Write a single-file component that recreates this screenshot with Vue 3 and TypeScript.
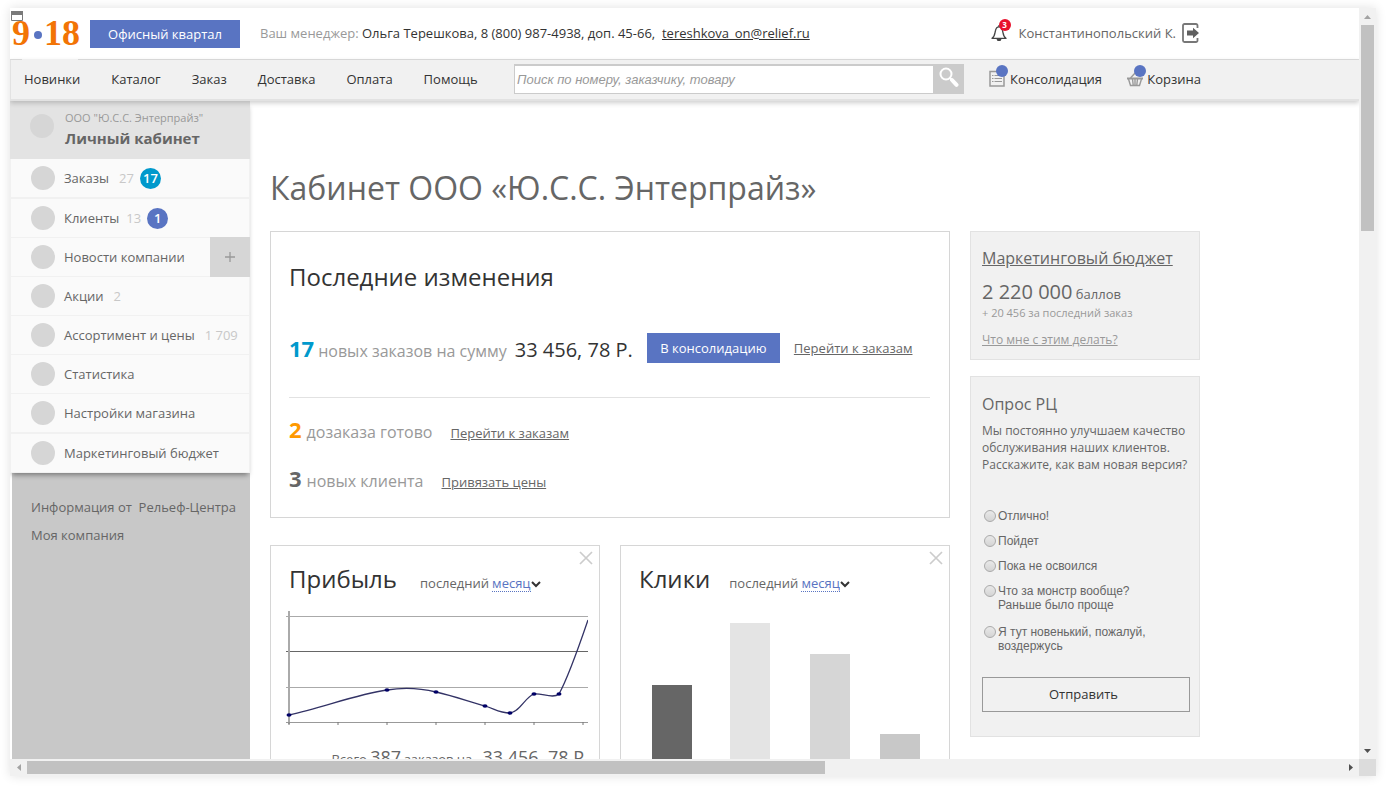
<script setup lang="ts">
import { ref } from 'vue'

interface MenuItem {
  title: string
  count?: string
  badge?: string
  tone?: string
  tight?: boolean
  thick?: boolean
  expandable?: boolean
}

const navLinks: string[] = ['Новинки', 'Каталог', 'Заказ', 'Доставка', 'Оплата', 'Помощь']

const menu: MenuItem[] = [
  { title: 'Заказы', count: '27', badge: '17', tone: 'cyan', thick: true },
  { title: 'Клиенты', count: '13', badge: '1', tone: 'blue', tight: true },
  { title: 'Новости компании', expandable: true },
  { title: 'Акции', count: '2' },
  { title: 'Ассортимент и цены', count: '1 709' },
  { title: 'Статистика' },
  { title: 'Настройки магазина', thick: true },
  { title: 'Маркетинговый бюджет' },
]

const answers: string[][] = [
  ['Отлично!'],
  ['Пойдет'],
  ['Пока не освоился'],
  ['Что за монстр вообще?', 'Раньше было проще'],
  ['Я тут новенький, пожалуй,', 'воздержусь'],
]

const ticks: number[] = [5, 54, 103, 152, 201, 250, 299]
const points: number[][] = [[5, 104], [103, 79], [152, 81], [201, 95], [226, 102], [250, 83], [275, 83]]

const query = ref('')
const answer = ref('')
const profitPeriod = ref('месяц')
const clicksPeriod = ref('месяц')
</script>

<template>
  <div class="stage">
    <div class="frame">
      <div class="page">
        <header class="top">
          <svg class="window-icon" width="12" height="10" viewBox="0 0 12 10" aria-hidden="true">
            <path d="M.5 .5h11v9H.5z" fill="#fff" stroke="#7a7a7a" />
            <path d="M0 0h12v4H0z" fill="#7a7a7a" />
          </svg>
          <div class="bar">
            <a href="#" class="logo"><span>9</span><i></i><span>18</span></a>
            <button type="button" class="btn quarter">Офисный квартал</button>
            <p class="manager">
              Ваш менеджер: <span>Ольга Терешкова, 8 (800) 987-4938, доп. 45-66,&nbsp; <a href="#">tereshkova_on@relief.ru</a></span>
            </p>
            <div class="user">
              <button type="button" class="plain bell" aria-label="Уведомления">
                <svg width="16" height="18" viewBox="0 0 16 18" fill="none" stroke="#444" stroke-width="1.3">
                  <path d="M1 14.300C4 12.500 3.800 9 4.500 6.500 5 4 6.300 2.800 8 2.800S11 4 11.500 6.500c.7 2.500.5 6 3.500 7.800z" stroke-linejoin="round" />
                  <path d="M8 1v2" />
                  <path d="M5.500 15h5L9.500 17h-3z" fill="#444" stroke="none" />
                </svg>
                <span class="alerts">3</span>
              </button>
              <span class="user-name">Константинопольский К.</span>
              <button type="button" class="plain exit" aria-label="Выйти">
                <svg width="18" height="20" viewBox="0 0 18 20" fill="none">
                  <path d="M15.500 5V2.500a1.500 1.500 0 0 0-1.500-1.500H2.500A1.500 1.500 0 0 0 1 2.500v15A1.500 1.500 0 0 0 2.500 19H14a1.500 1.500 0 0 0 1.500-1.500V15" stroke="#777" stroke-width="1.800" />
                  <path d="M5 7.500h6V4.800l6 5.200-6 5.200v-2.700H5z" fill="#606060" />
                </svg>
              </button>
            </div>
          </div>
        </header>

        <nav class="nav">
          <div class="bar">
            <div class="links">
              <a v-for="(link, i) in navLinks" :key="link" href="#" :class="{ current: i === 0 }">{{ link }}</a>
            </div>
            <form class="search" @submit.prevent>
              <input v-model="query" type="text" placeholder="Поиск по номеру, заказчику, товару" aria-label="Поиск" />
              <button type="submit" aria-label="Найти">
                <svg width="20" height="21" viewBox="0 0 20 21" fill="none" stroke="#fff">
                  <circle cx="7" cy="7" r="5.500" stroke-width="2" />
                  <path d="M11 11l2 2" stroke-width="2" />
                  <path d="M13 13l4.500 4.800" stroke-width="4" stroke-linecap="round" />
                </svg>
              </button>
            </form>
            <a href="#" class="tool consolidation">
              <span class="tool-icon">
                <svg width="16" height="17" viewBox="0 0 16 17" fill="none" stroke="#999">
                  <path d="M1 1.500h14v14.500H1z" stroke-width="1.500" />
                  <path d="M5.500 5.500H13M5.500 8.500H13M5.500 11.500H13M3 5.500h1.500M3 8.500h1.500M3 11.500h1.500" />
                </svg>
                <i></i>
              </span>
              <span>Консолидация</span>
            </a>
            <a href="#" class="tool basket">
              <span class="tool-icon">
                <svg width="16" height="17" viewBox="0 0 16 17" fill="none" stroke="#999">
                  <path d="M0 8.500h16" stroke-width="2" />
                  <path d="M1.500 9l2 6.500h9l2-6.500M5.500 9l.7 6M8 9v6M10.500 9l-.7 6" stroke-width="1.400" />
                  <path d="M3.500 8L9 2" stroke-width="1.400" />
                </svg>
                <i></i>
              </span>
              <span>Корзина</span>
            </a>
          </div>
        </nav>

        <div class="body">
          <aside class="side">
            <div class="menu">
              <a href="#" class="account">
                <i class="dot"></i>
                <span><small>ООО "Ю.С.С. Энтерпрайз"</small><b>Личный кабинет</b></span>
              </a>
              <ul>
                <li v-for="item in menu" :key="item.title" :class="{ thick: item.thick }">
                  <a href="#">
                    <i class="dot"></i>
                    <span>{{ item.title }}</span>
                    <span v-if="item.count" class="count" :class="{ tight: item.tight }">{{ item.count }}</span>
                    <span v-if="item.badge" class="badge" :class="item.tone">{{ item.badge }}</span>
                  </a>
                  <button v-if="item.expandable" type="button" class="expand" aria-label="Развернуть">
                    <svg width="10" height="10" viewBox="0 0 10 10"><path d="M5 0v10M0 5h10" stroke="#999" stroke-width="1.300" /></svg>
                  </button>
                </li>
              </ul>
            </div>
            <div class="side-links">
              <a href="#">Информация от&nbsp; Рельеф-Центра</a>
              <a href="#">Моя компания</a>
            </div>
          </aside>

          <main class="main">
            <h1>Кабинет ООО «Ю.С.С. Энтерпрайз»</h1>
            <div class="columns">
              <div class="left">
                <section class="card changes">
                  <h2>Последние изменения</h2>
                  <div class="first">
                    <div class="row">
                      <b class="cyan-text">17</b>
                      <span class="muted">новых заказов на сумму</span>
                      <span class="sum">33 456, 78 Р.</span>
                    </div>
                    <button type="button" class="btn consolidate">В консолидацию</button>
                    <a href="#">Перейти к заказам</a>
                  </div>
                  <hr />
                  <div class="row second">
                    <b class="orange-text">2</b>
                    <span class="muted">дозаказа готово</span>
                    <a href="#">Перейти к заказам</a>
                  </div>
                  <div class="row third">
                    <b>3</b>
                    <span class="muted">новых клиента</span>
                    <a href="#">Привязать цены</a>
                  </div>
                </section>

                <div class="charts">
                  <section class="card chart">
                    <button type="button" class="plain close" aria-label="Закрыть">
                      <svg width="14" height="14" viewBox="0 0 14 14"><path d="M1 1l12 12M13 1L1 13" stroke="#ccc" stroke-width="1.700" /></svg>
                    </button>
                    <div class="chart-head profit-head">
                      <h2>Прибыль</h2>
                      <label class="period">
                        <span>последний</span>
                        <select v-model="profitPeriod">
                          <option>месяц</option>
                          <option>год</option>
                        </select>
                        <svg width="10" height="7" viewBox="0 0 10 7" fill="none"><path d="M1 1l4 4 4-4" stroke="#333" stroke-width="2" /></svg>
                      </label>
                    </div>
                    <svg class="line-chart" width="304" height="116" viewBox="0 0 304 116" fill="none">
                      <path d="M2 5.500h302M2 76.500h302" stroke="#aaa" />
                      <path d="M2 40.500h302" stroke="#666" />
                      <path d="M2 111.500h302" stroke="#999" />
                      <path d="M5 0v113" stroke="#aaa" stroke-width="2" />
                      <path v-for="x in ticks" :key="x" :d="`M${x} 111v3`" stroke="#777" />
                      <path d="M5 104C40 96 74 83 103 79C120 76 136 77 152 81C170 85 186 91 201 95C211 98 215 102 226 102C236 101 241 86 250 83C258 82 269 88 275 83C280 74 290 50 304 9" stroke="#333366" stroke-width="1.300" />
                      <ellipse v-for="p in points" :key="p[0]" :cx="p[0]" :cy="p[1]" rx="2.500" ry="1.800" fill="#000066" />
                    </svg>
                    <p class="total">Всего <b>387</b> заказов на&nbsp;&nbsp; <b>33 456, 78 Р</b></p>
                  </section>

                  <section class="card chart">
                    <button type="button" class="plain close" aria-label="Закрыть">
                      <svg width="14" height="14" viewBox="0 0 14 14"><path d="M1 1l12 12M13 1L1 13" stroke="#ccc" stroke-width="1.700" /></svg>
                    </button>
                    <div class="chart-head">
                      <h2>Клики</h2>
                      <label class="period">
                        <span>последний</span>
                        <select v-model="clicksPeriod">
                          <option>месяц</option>
                          <option>год</option>
                        </select>
                        <svg width="10" height="7" viewBox="0 0 10 7" fill="none"><path d="M1 1l4 4 4-4" stroke="#333" stroke-width="2" /></svg>
                      </label>
                    </div>
                    <svg class="bar-chart" width="268" height="160" viewBox="0 0 268 160">
                      <path d="M0 62h40v98H0z" fill="#666" />
                      <path d="M78 0h40v160H78z" fill="#e4e4e4" />
                      <path d="M158 31h40v129h-40z" fill="#d6d6d6" />
                      <path d="M228 111h40v49h-40z" fill="#c8c8c8" />
                    </svg>
                  </section>
                </div>
              </div>

              <div class="right">
                <section class="panel budget">
                  <a href="#" class="panel-title">Маркетинговый бюджет</a>
                  <p class="points"><span>2 220 000</span> баллов</p>
                  <p class="gain">+ 20 456 за последний заказ</p>
                  <a href="#" class="hint">Что мне с этим делать?</a>
                </section>
                <form class="panel poll" @submit.prevent>
                  <h3 class="panel-title">Опрос РЦ</h3>
                  <p>Мы постоянно улучшаем качество обслуживания наших клиентов. Расскажите, как вам новая версия?</p>
                  <div class="answers">
                    <label v-for="lines in answers" :key="lines[0]">
                      <input v-model="answer" type="radio" name="poll" :value="lines[0]" />
                      <span><template v-for="(line, i) in lines" :key="line"><br v-if="i" />{{ line }}</template></span>
                    </label>
                  </div>
                  <button type="submit" class="send">Отправить</button>
                </form>
              </div>
            </div>
          </main>
        </div>
      </div>

      <div class="scroll vertical">
        <button type="button" aria-label="Вверх"><svg width="7" height="4" viewBox="0 0 7 4"><path d="M0 4l3.500-4L7 4z" fill="#a3a3a3" /></svg></button>
        <div class="thumb"></div>
        <button type="button" aria-label="Вниз"><svg width="7" height="4" viewBox="0 0 7 4"><path d="M0 0h7L3.500 4z" fill="#505050" /></svg></button>
      </div>
      <div class="scroll horizontal">
        <button type="button" aria-label="Влево"><svg width="4" height="7" viewBox="0 0 4 7"><path d="M4 0v7L0 3.500z" fill="#a3a3a3" /></svg></button>
        <div class="thumb"></div>
        <button type="button" aria-label="Вправо"><svg width="4" height="7" viewBox="0 0 4 7"><path d="M0 0v7l4-3.500z" fill="#505050" /></svg></button>
      </div>
      <div class="corner"></div>
    </div>
  </div>
</template>

<style>
body {
  margin: 0;
  background: #fff;
}
</style>

<style scoped>
* {
  box-sizing: border-box;
}

.stage {
  height: 100vh;
  padding: 8px 10px 12px;
  font: 13px/18px "Open Sans", "Noto Sans", sans-serif;
  color: #333;
}

.frame {
  display: grid;
  grid-template: minmax(0, 1fr) 17px / minmax(0, 1fr) 17px;
  height: 100%;
  background: #fff;
  box-shadow: 0 0 10px rgba(0, 0, 0, 0.12);
}

.page {
  display: flex;
  flex-direction: column;
  overflow: hidden;
}

a {
  color: inherit;
}

button,
input,
select {
  margin: 0;
  font: inherit;
  color: inherit;
}

h1,
h2,
h3,
p,
ul {
  margin: 0;
  padding: 0;
  font-weight: 400;
}

.bar {
  display: flex;
  align-items: center;
  max-width: 1190px;
  height: 100%;
}

.top {
  position: relative;
  flex: none;
  height: 52px;
  border-bottom: 1px solid #dedede;
}

.window-icon {
  position: absolute;
  left: 1px;
  top: 3px;
}

.logo {
  display: flex;
  align-items: center;
  width: 80px;
  padding: 0 0 2px 2px;
  font: bold 36px/36px "Liberation Serif", serif;
  color: #f27405;
  text-decoration: none;
}

.logo i {
  width: 8px;
  height: 8px;
  margin: 4px 2px 0 4px;
  border-radius: 50%;
  background: #5974c2;
}

.btn {
  padding: 0;
  border: 0;
  background: #5974c2;
  color: #fff;
}

.quarter {
  width: 150px;
  height: 28px;
}

.manager {
  margin-left: 20px;
  padding-bottom: 2px;
  color: #999;
}

.manager span {
  color: #333;
}

.user {
  display: flex;
  align-items: center;
  margin-left: auto;
  padding-bottom: 2px;
  color: #666;
}

.plain {
  display: flex;
  padding: 0;
  border: 0;
  background: none;
}

.bell {
  position: relative;
  margin-right: 12px;
}

.alerts {
  position: absolute;
  left: 8px;
  top: -5px;
  width: 12px;
  height: 12px;
  border-radius: 50%;
  background: #e8112d;
  font-size: 8px;
  font-weight: 700;
  line-height: 12px;
  text-align: center;
  color: #fff;
}

.exit {
  margin-left: 6px;
}

.nav {
  position: relative;
  z-index: 2;
  flex: none;
  height: 41px;
  padding-bottom: 2px;
  border-bottom: 2px solid #e2e2e2;
  border-left: 1px solid #e2e2e2;
  background: #f1f1f1;
  box-shadow: 0 2px 5px rgba(0, 0, 0, 0.2);
}

.links {
  display: flex;
  gap: 31px;
  width: 503px;
  padding-left: 13px;
}

.nav a {
  text-decoration: none;
}

.current {
  position: relative;
}

.current::before {
  content: "";
  position: absolute;
  left: -2px;
  right: 2px;
  top: -11px;
  height: 1px;
  background: #f1f1f1;
}

.search {
  display: flex;
  width: 450px;
  height: 30px;
}

.search input {
  flex: 1;
  min-width: 0;
  padding: 1px 2px 0;
  border: 1px solid #cbcbcb;
  border-top-width: 2px;
  border-right-width: 0;
  border-radius: 0;
  outline: 0;
  background: #fff;
  font: italic 13px/16px "Liberation Sans", Arial, sans-serif;
}

.search input::placeholder {
  color: #999;
}

.search button {
  display: flex;
  align-items: center;
  justify-content: center;
  width: 31px;
  padding: 0 0 2px;
  border: 0;
  background: #cbcbcb;
}

.tool {
  display: flex;
  align-items: center;
}

.consolidation {
  margin-left: 25px;
}

.consolidation .tool-icon {
  width: 21px;
}

.basket {
  margin-left: auto;
}

.tool-icon {
  position: relative;
  display: flex;
  width: 20px;
}

.tool-icon i {
  position: absolute;
  left: 7px;
  top: -5px;
  width: 12px;
  height: 12px;
  border-radius: 50%;
  background: #5974c2;
}

.body {
  display: flex;
  flex: 1;
  min-height: 0;
}

.side {
  display: flex;
  flex-direction: column;
  flex: none;
  width: 240px;
  color: #666;
}

.side a {
  text-decoration: none;
}

.menu {
  position: relative;
  flex: none;
  background: #fafafa;
  box-shadow: 0 4px 5px -2px rgba(0, 0, 0, 0.4);
}

.account {
  display: flex;
  height: 58px;
  padding: 9px 0 0 20px;
  background: #e3e3e3;
}

.account .dot {
  margin: 4px 11px 0 0;
}

.account small,
.account b {
  display: block;
}

.account small {
  font-size: 11px;
  line-height: 16px;
  color: #999;
}

.account b {
  font-size: 15px;
  line-height: 24px;
}

.dot {
  flex: none;
  width: 24px;
  height: 24px;
  margin-right: 9px;
  border-radius: 50%;
  background: #d6d6d6;
}

.menu ul {
  border: 1px solid #f1f1f1;
  border-width: 0 1px;
  list-style: none;
}

.menu li {
  position: relative;
  height: 39px;
  border-bottom: 1px solid #f1f1f1;
}

.menu .thick {
  height: 40px;
  border-bottom-width: 2px;
}

.menu li a {
  display: flex;
  align-items: center;
  height: 38px;
  padding-left: 20px;
}

.count {
  margin-left: 10px;
  color: #c8c8c8;
}

.tight {
  margin-left: 7px;
}

.badge {
  width: 21px;
  height: 21px;
  margin-left: 6px;
  border-radius: 50%;
  font-weight: 600;
  line-height: 21px;
  text-align: center;
  color: #fff;
}

.cyan {
  background: #0099cc;
}

.blue {
  background: #5974c2;
}

.expand {
  position: absolute;
  right: -1px;
  top: -1px;
  display: flex;
  align-items: center;
  justify-content: center;
  width: 40px;
  height: 40px;
  padding: 0;
  border: 0;
  background: #d6d6d6;
}

.side-links {
  display: flex;
  flex: 1;
  flex-direction: column;
  gap: 10px;
  margin-left: 2px;
  padding: 25px 0 0 19px;
  background: #c8c8c8;
}

.main {
  flex: 1;
  max-width: 950px;
  padding: 65px 0 0 20px;
}

h1 {
  font-size: 32px;
  line-height: 44px;
  color: #666;
}

.columns {
  display: grid;
  grid-template-columns: minmax(0, 1fr) 230px;
  gap: 20px;
  margin-top: 21px;
}

.card {
  border: 1px solid #d6d6d6;
  background: #fff;
}

h2 {
  font-size: 24px;
  line-height: 34px;
}

.changes {
  padding: 28px 19px 24px 18px;
}

.row {
  display: flex;
  align-items: baseline;
  color: #666;
}

.row b {
  margin-right: 5px;
  font-size: 22px;
  line-height: 30px;
}

.row .cyan-text {
  margin-right: 4px;
  color: #0099cc;
}

.row .orange-text {
  color: #ff9900;
}

.muted {
  font-size: 16px;
  color: #999;
}

.sum {
  margin-left: 8px;
  font-size: 20px;
  color: #333;
}

.consolidate {
  width: 133px;
  height: 30px;
  margin: 0 14px;
}

.first {
  display: flex;
  align-items: center;
  margin-top: 39px;
  color: #666;
}

.second {
  padding-top: 16px;
}

.third {
  padding-top: 19px;
}

.second a,
.third a {
  margin-left: 18px;
}

hr {
  height: 1px;
  margin: 34px 0 0;
  border: 0;
  background: #e2e2e2;
}

.charts {
  display: grid;
  grid-template-columns: 1fr 1fr;
  gap: 20px;
  margin-top: 27px;
}

.chart {
  position: relative;
  height: 260px;
}

.close {
  position: absolute;
  right: 6px;
  top: 5px;
}

.chart-head {
  display: flex;
  align-items: baseline;
  gap: 19px;
  padding: 16px 0 0 18px;
}

.profit-head {
  gap: 23px;
}

.period {
  display: flex;
  align-items: baseline;
  color: #666;
}

.period select {
  height: 17px;
  margin-left: 3px;
  padding: 0;
  border: 0;
  border-bottom: 1px dotted #5974c2;
  border-radius: 0;
  background: none;
  color: #5974c2;
  line-height: 16px;
  appearance: none;
}

.line-chart,
.bar-chart {
  display: block;
}

.line-chart {
  margin: 15px 0 0 13px;
}

.bar-chart {
  margin: 27px 0 0 31px;
}

.total {
  margin: 15px 15px 0 0;
  line-height: 30px;
  text-align: right;
  color: #666;
}

.total b {
  font-size: 18px;
  font-weight: 400;
}

.right {
  display: flex;
  flex-direction: column;
  align-items: stretch;
  gap: 16px;
}

.panel {
  padding: 15px 9px 0 11px;
  border: 1px solid #e2e2e2;
  background: #f1f1f1;
  color: #666;
}

.panel-title {
  display: block;
  font-size: 16px;
  line-height: 24px;
}

.budget {
  height: 129px;
  padding-top: 14px;
}

.points {
  margin-top: 11px;
  line-height: 22px;
}

.points span {
  font-size: 20px;
}

.gain {
  font-size: 11px;
  line-height: 16px;
  color: #999;
}

.hint {
  display: block;
  margin-top: 10px;
  font-size: 12px;
  color: #999;
}

.poll {
  padding-bottom: 24px;
}

.poll p {
  margin-top: 6px;
  font-size: 12px;
  line-height: 17px;
}

.answers {
  display: flex;
  flex-direction: column;
  gap: 11px;
  margin-top: 36px;
  font: 12px/14px "Liberation Sans", Arial, sans-serif;
}

.answers label {
  display: flex;
  align-items: flex-start;
}

.answers label:last-child {
  margin-top: 2px;
}

.answers input {
  flex: none;
  width: 12px;
  height: 12px;
  margin: 1px 2px 0;
  border: 1px solid #aaa;
  border-radius: 50%;
  background: linear-gradient(#e9e9e9, #d4d4d4);
  appearance: none;
}

.answers input:checked {
  background: radial-gradient(#555 0 3px, #ddd 4px);
}

.send {
  width: 100%;
  height: 35px;
  margin-top: 24px;
  padding: 0 5px 2px 0;
  border: 1px solid #999;
  background: none;
  color: #333;
}

.scroll {
  display: flex;
  background: #f1f1f1;
}

.scroll button {
  display: flex;
  align-items: center;
  justify-content: center;
  flex: none;
  width: 17px;
  height: 17px;
  padding: 0;
  border: 0;
  background: none;
}

.scroll button:last-child {
  margin: auto 0 0 auto;
}

.vertical {
  flex-direction: column;
}

.thumb {
  background: #c1c1c1;
}

.vertical .thumb {
  width: 13px;
  height: 206px;
  margin: 0 2px;
}

.horizontal .thumb {
  width: 798px;
  height: 13px;
  margin: 2px 0;
}

.corner {
  background: #dcdcdc;
}
</style>
